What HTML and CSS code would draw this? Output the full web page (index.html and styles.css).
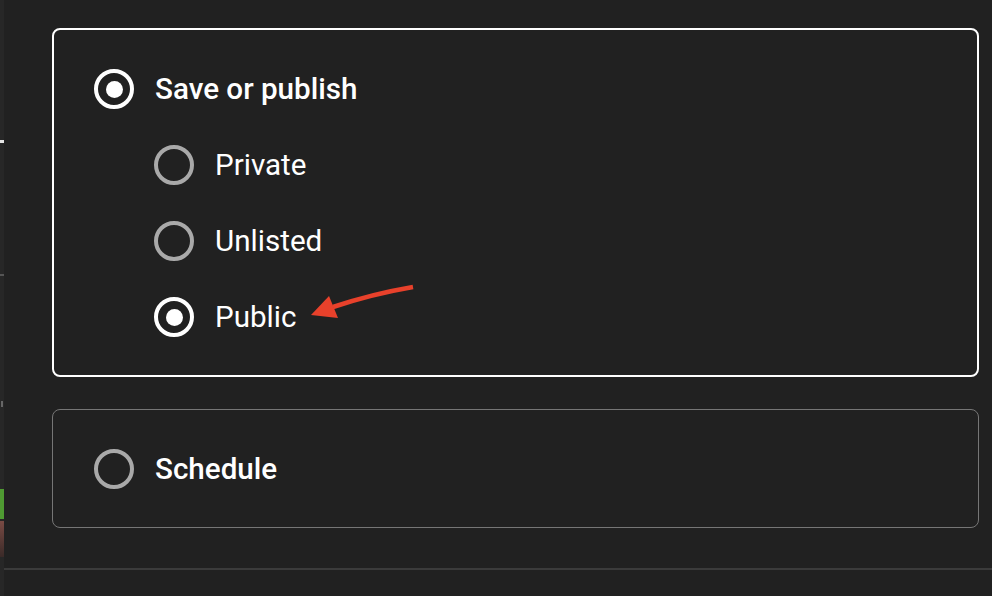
FILE: index.html
```html
<!DOCTYPE html>
<html>
<head>
<meta charset="utf-8">
<link rel="stylesheet" href="styles.css">
</head>
<body>
<div class="page">
  <div class="strip">
    <span class="mark mark-white"></span>
    <span class="mark mark-line"></span>
    <span class="mark mark-small"></span>
    <span class="thumb-green"></span>
    <span class="thumb-red"></span>
  </div>
  <div class="main">
    <div class="content">
      <div class="card card-active">
        <div class="row">
          <span class="radio radio-on"></span>
          <span class="label label-strong">Save or publish</span>
        </div>
        <div class="sub">
          <div class="row">
            <span class="radio"></span>
            <span class="label">Private</span>
          </div>
          <div class="row">
            <span class="radio"></span>
            <span class="label">Unlisted</span>
          </div>
          <div class="row">
            <span class="radio radio-on"></span>
            <span class="label">Public</span>
          </div>
        </div>
      </div>
      <div class="card card-idle">
        <div class="row">
          <span class="radio"></span>
          <span class="label label-strong">Schedule</span>
        </div>
      </div>
    </div>
    <div class="footer-line"></div>
  </div>
  <svg class="arrow" width="992" height="596" viewBox="0 0 992 596">
    <path d="M413 287 Q372 294 333 307" stroke="#e8412b" stroke-width="4.5" fill="none" stroke-linecap="butt"/>
    <polygon points="311,315 329,296 338,318" fill="#e8412b"/>
  </svg>
</div>
</body>
</html>
```
FILE: styles.css
```css
* { box-sizing: border-box; }
html, body { margin: 0; padding: 0; }
body {
  background: #212121;
  font-family: Roboto, "Liberation Sans", sans-serif;
  color: #fff;
  width: 992px;
  height: 596px;
  overflow: hidden;
}
.page {
  position: relative;
  display: flex;
  height: 596px;
}
.strip {
  width: 4px;
  flex: none;
  background: #272727;
  display: flex;
  flex-direction: column;
}
.mark { display: block; }
.mark-white { margin-top: 140px; height: 3px; width: 4px; background: #e6e6e6; }
.mark-line { margin-top: 131px; height: 2px; width: 4px; background: #555; }
.mark-small { margin-top: 125px; height: 6px; width: 2px; margin-left: 1px; background: #666; }
.thumb-green { margin-top: 82px; height: 30px; width: 4px; background: #4f9a32; }
.thumb-red { margin-top: 2px; height: 36px; width: 4px; background: linear-gradient(#7a4b44, #3a2a28); }
.main {
  flex: 1;
  display: flex;
  flex-direction: column;
}
.content {
  padding: 28px 13px 0 48px;
  display: flex;
  flex-direction: column;
  gap: 32px;
}
.card {
  border-radius: 8px;
  display: flex;
  flex-direction: column;
  gap: 36px;
}
.card-active {
  border: 2px solid #fff;
  padding: 39px 40px 38px 40px;
}
.card-idle {
  border: 1px solid #767676;
  padding: 39px 41px 38px 41px;
}
.sub {
  padding-left: 60px;
  display: flex;
  flex-direction: column;
  gap: 36px;
}
.row {
  display: flex;
  align-items: center;
  height: 40px;
  gap: 21px;
}
.radio {
  width: 40px;
  height: 40px;
  border-radius: 50%;
  border: 4px solid #a9a9a9;
  flex: none;
  display: flex;
  align-items: center;
  justify-content: center;
}
.radio-on { border-color: #fff; }
.radio-on::after {
  content: "";
  width: 17px;
  height: 17px;
  border-radius: 50%;
  background: #fff;
}
.label {
  font-size: 29.6px;
  font-weight: 400;
  line-height: 40px;
  color: #fff;
}
.label-strong { font-weight: 500; }
.footer-line {
  margin-top: 40px;
  height: 2px;
  background: #3b3b3b;
}
.arrow {
  position: absolute;
  left: 0;
  top: 0;
  pointer-events: none;
}
```
